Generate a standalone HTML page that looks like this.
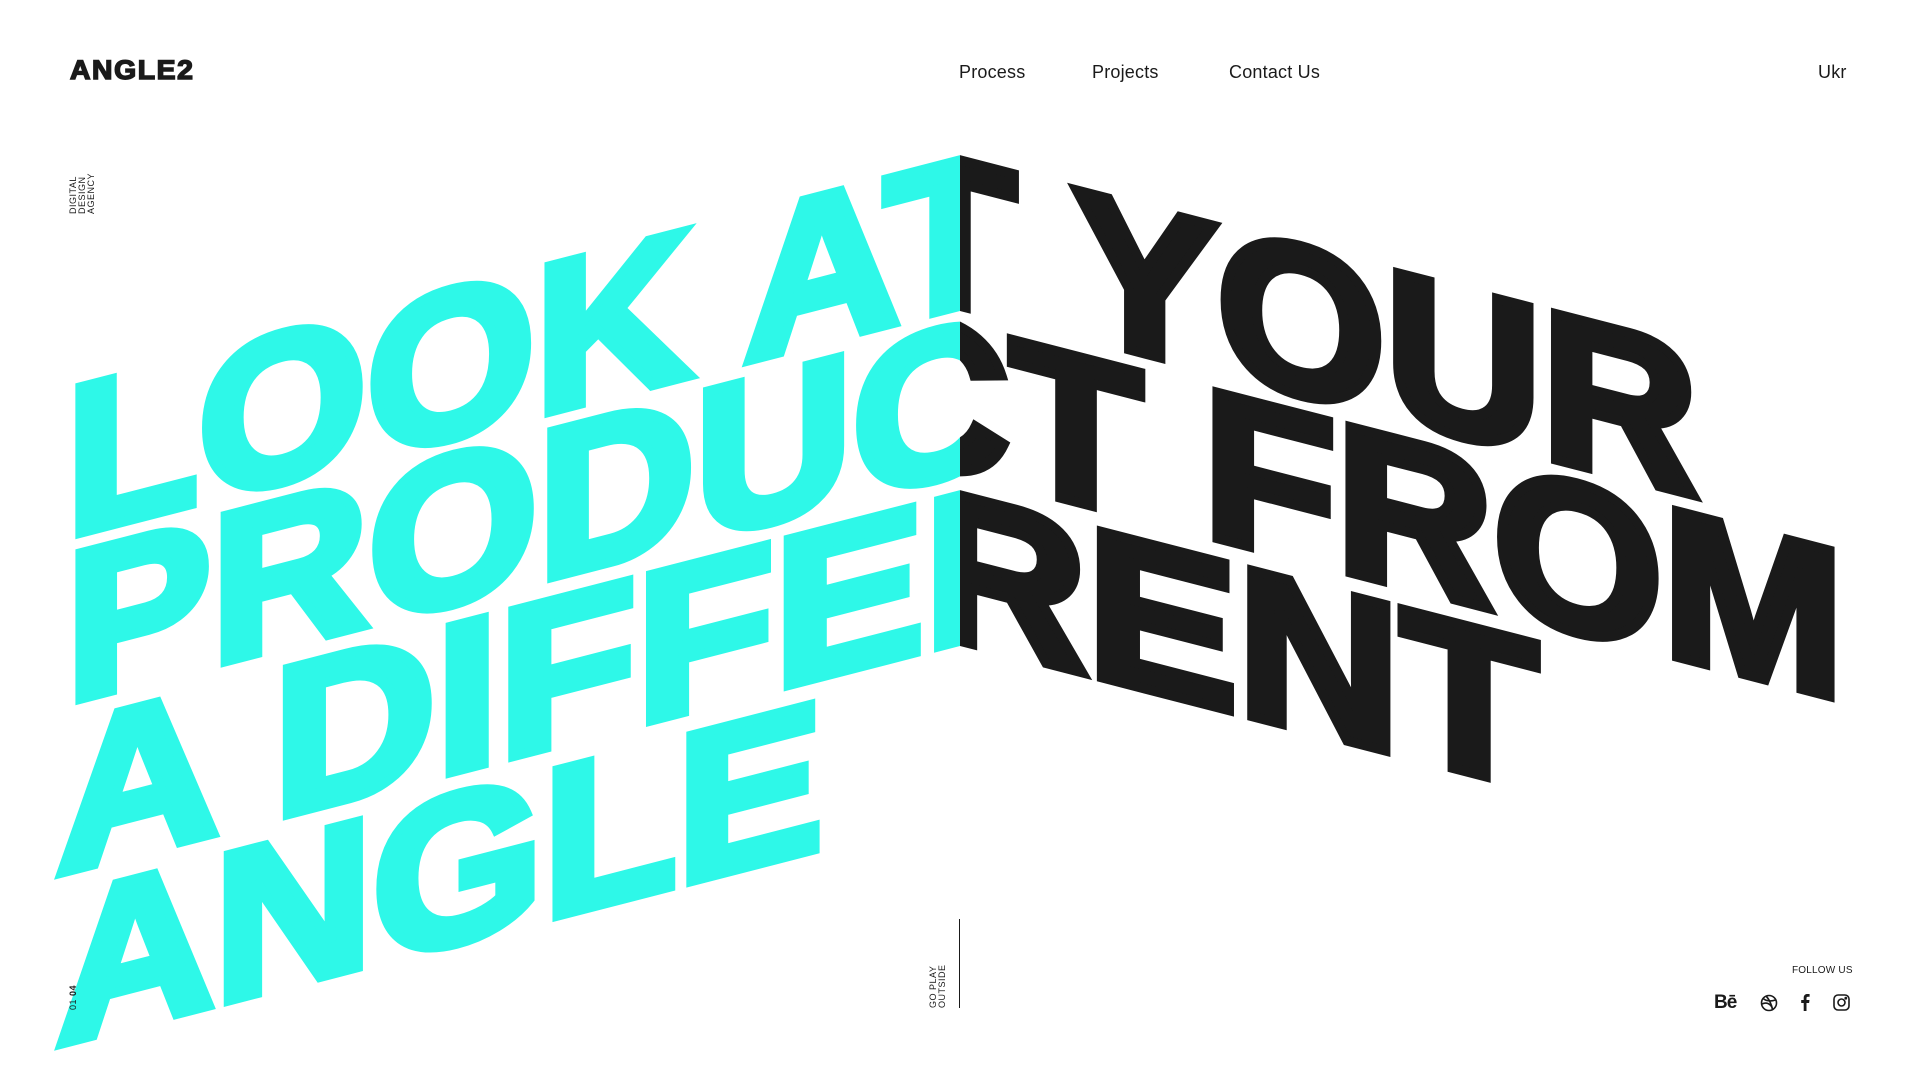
<!DOCTYPE html>
<html><head><meta charset="utf-8"><style>
html,body{margin:0;padding:0;width:1920px;height:1080px;background:#fff;overflow:hidden;font-family:"Liberation Sans",sans-serif;color:#1a1a1a}
.abs{position:absolute}
.nav{top:62px;font-size:18px;font-weight:300;letter-spacing:0.2px}
.vt{position:absolute;transform-origin:0 0;transform:rotate(-90deg);font-size:9px;line-height:9px;letter-spacing:0.5px;white-space:nowrap}
</style></head><body>
<svg class="abs" style="left:0;top:0" width="1920" height="1080" viewBox="0 0 1920 1080">
<defs>
<clipPath id="cl"><rect x="0" y="-2000" width="960" height="5000"/></clipPath>
<clipPath id="cr"><rect x="960" y="-2000" width="1200" height="5000"/></clipPath>
<g id="txt" font-family="Liberation Sans, sans-serif" font-weight="bold" font-size="212">
<text x="66" y="306" textLength="1632" lengthAdjust="spacingAndGlyphs">LOOK AT YOUR</text>
<text x="66" y="472" textLength="1778" lengthAdjust="spacingAndGlyphs">PRODUCT FROM</text>
<text x="56" y="641" textLength="1482" lengthAdjust="spacingAndGlyphs">A DIFFERENT</text>
<text x="56" y="812" textLength="767" lengthAdjust="spacingAndGlyphs">ANGLE</text>
</g>
</defs>
<g clip-path="url(#cl)"><g transform="matrix(1,-0.258,0,1,0,247.7)" fill="#2ef8e8" stroke="#2ef8e8" stroke-width="10" stroke-linejoin="miter"><use href="#txt"/></g></g>
<g clip-path="url(#cr)"><g transform="matrix(1,0.258,0,1,0,-247.7)" fill="#1a1a1a" stroke="#1a1a1a" stroke-width="10" stroke-linejoin="miter"><use href="#txt"/></g></g>
</svg>

<div class="abs" style="left:70px;top:56px;font-size:27px;font-weight:bold;letter-spacing:1.5px;line-height:28px;-webkit-text-stroke:1.5px #1a1a1a;transform:scaleX(1.05);transform-origin:0 0">ANGLE2</div>
<div class="abs nav" style="left:959px">Process</div>
<div class="abs nav" style="left:1092px">Projects</div>
<div class="abs nav" style="left:1229px">Contact Us</div>
<div class="abs nav" style="left:1818px">Ukr</div>

<div class="vt" style="left:69px;top:214px">DIGITAL<br>DESIGN<br>AGENCY</div>
<div class="vt" style="left:69px;top:1010px">01 <b>04</b></div>
<div class="vt" style="left:929px;top:1008px">GO PLAY<br>OUTSIDE</div>
<div class="abs" style="left:959px;top:919px;width:1px;height:89px;background:#1a1a1a"></div>

<div class="abs" style="left:1792px;top:965px;font-size:10px;letter-spacing:0.2px">FOLLOW US</div>
<div class="abs" style="left:1714px;top:992px;font-size:19px;font-weight:bold;letter-spacing:-1px">Bē</div>
<svg class="abs" style="left:1760px;top:994px" width="18" height="18" viewBox="0 0 18 18" fill="none" stroke="#1a1a1a" stroke-width="1.6"><circle cx="9" cy="9" r="7.5"/><path d="M3 4.5c4 3 8 3 12.5 1.5M2 10c4-2 9-1 11 6M6 2c3 3 6 9 6.5 14"/></svg>
<svg class="abs" style="left:1800px;top:993px" width="10" height="18" viewBox="0 0 10 18"><path d="M6.5 18V10h2.6l.4-3H6.5V5.2c0-.9.3-1.5 1.5-1.5h1.6V1.1C9.3 1 8.4 1 7.4 1 5.2 1 3.7 2.3 3.7 4.8V7H1.2v3h2.5v8z" fill="#1a1a1a"/></svg>
<svg class="abs" style="left:1833px;top:994px" width="17" height="17" viewBox="0 0 17 17" fill="none" stroke="#1a1a1a" stroke-width="1.6"><rect x="1" y="1" width="15" height="15" rx="4"/><circle cx="8.5" cy="8.5" r="3.5"/><circle cx="12.8" cy="4.2" r=".6" fill="#1a1a1a"/></svg>
</body></html>
